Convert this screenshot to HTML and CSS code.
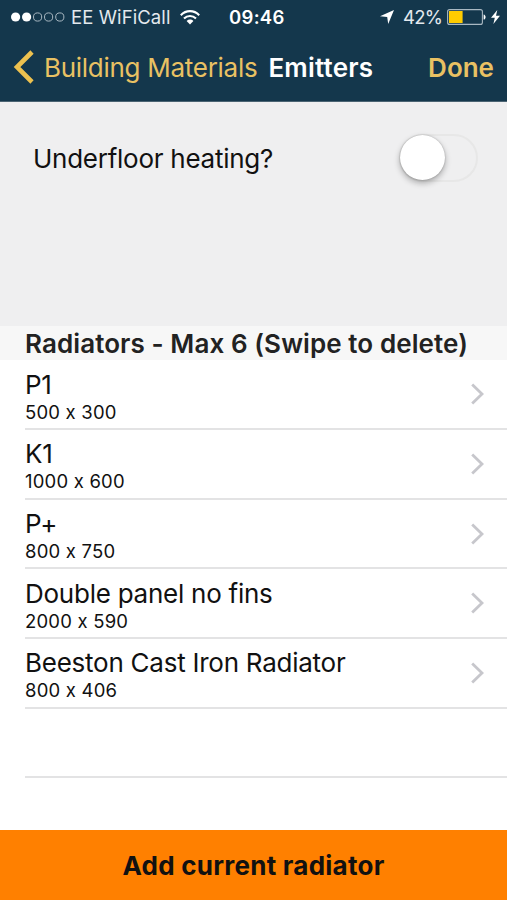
FILE: index.html
```html
<!DOCTYPE html>
<html lang="en">
<head>
    <meta charset="UTF-8">
    <meta name="viewport" content="width=device-width, initial-scale=1.0">
    <title>Emitters</title>
    <link rel="stylesheet" href="styles.css">
</head>
<body>
    <header class="top-bar">
        <div class="status-bar">
            <svg class="signal" width="54" height="12" viewBox="0 0 54 12">
                <circle cx="4.6" cy="6" r="4.6" fill="#fff"/>
                <circle cx="15.6" cy="6" r="4.6" fill="#fff"/>
                <g fill="none" stroke="#a9b8c2" stroke-width="1">
                    <circle cx="26.6" cy="6" r="4.1"/>
                    <circle cx="37.6" cy="6" r="4.1"/>
                    <circle cx="48.8" cy="6" r="4.1"/>
                </g>
            </svg>
            <span class="carrier">EE WiFiCall</span>
            <svg class="wifi" width="20" height="15" viewBox="0 0 20 15">
                <g fill="none" stroke="#fff" stroke-width="2.1">
                    <path d="M0.8 5.2C6 -0.2 14 -0.2 19.2 5.2"/>
                    <path d="M4 8.6C7.4 5.1 12.6 5.1 16 8.6"/>
                </g>
                <path d="M6.6 10.9C8.6 9 11.4 9 13.4 10.9L10 14.4Z" fill="#fff"/>
            </svg>
            <span class="time">09:46</span>
            <svg class="location" width="14" height="14" viewBox="0 0 14 14">
                <path d="M14 0L8.2 14L7.2 7L0 6.2Z" fill="#fff"/>
            </svg>
            <span class="percent">42%</span>
            <svg class="battery" width="40" height="16" viewBox="0 0 40 16">
                <rect x="0.6" y="0.6" width="34.8" height="14.8" rx="2" fill="none" stroke="#a9b8c2" stroke-width="1.1"/>
                <rect x="2" y="2" width="13.6" height="12" fill="#ffcc00"/>
                <path d="M36.6 5.4C39.2 5.8 39.2 10.2 36.6 10.6Z" fill="#fff"/>
            </svg>
            <svg class="bolt" width="9" height="14" viewBox="0 0 9 14">
                <path d="M6.3 0L0 7.8H3.8L2.4 14L9 5.8H5Z" fill="#fff"/>
            </svg>
        </div>
        <nav class="nav-bar">
            <a class="back">
                <svg width="21" height="34" viewBox="0 0 21 34">
                    <path d="M19 2L4 17L19 32" fill="none" stroke="#edc14f" stroke-width="4.6"/>
                </svg>
                <span>Building Materials</span>
            </a>
            <h1>Emitters</h1>
            <a class="done">Done</a>
        </nav>
    </header>

    <section class="settings">
        <label class="setting">
            <span class="setting-label">Underfloor heating?</span>
            <span class="switch"><span class="knob"></span></span>
        </label>
    </section>

    <h2>Radiators - Max 6 (Swipe to delete)</h2>
    <ul class="radiators">
        <li>
            <div class="info">
                <span class="name">P1</span>
                <span class="size">500 x 300</span>
            </div>
            <svg class="arrow" width="13" height="22" viewBox="0 0 13 22"><path d="M1.2 1.5L11 11L1.2 20.5"/></svg>
        </li>
        <li>
            <div class="info">
                <span class="name">K1</span>
                <span class="size">1000 x 600</span>
            </div>
            <svg class="arrow" width="13" height="22" viewBox="0 0 13 22"><path d="M1.2 1.5L11 11L1.2 20.5"/></svg>
        </li>
        <li>
            <div class="info">
                <span class="name">P+</span>
                <span class="size">800 x 750</span>
            </div>
            <svg class="arrow" width="13" height="22" viewBox="0 0 13 22"><path d="M1.2 1.5L11 11L1.2 20.5"/></svg>
        </li>
        <li>
            <div class="info">
                <span class="name">Double panel no fins</span>
                <span class="size">2000 x 590</span>
            </div>
            <svg class="arrow" width="13" height="22" viewBox="0 0 13 22"><path d="M1.2 1.5L11 11L1.2 20.5"/></svg>
        </li>
        <li>
            <div class="info">
                <span class="name">Beeston Cast Iron Radiator</span>
                <span class="size">800 x 406</span>
            </div>
            <svg class="arrow" width="13" height="22" viewBox="0 0 13 22"><path d="M1.2 1.5L11 11L1.2 20.5"/></svg>
        </li>
        <li></li>
    </ul>

    <button class="add-btn">Add current radiator</button>
</body>
</html>
```

FILE: styles.css
```css
* {
    box-sizing: border-box;
}
body {
    margin: 0;
    height: 900px;
    display: flex;
    flex-direction: column;
    background-color: #fff;
    color: #111;
    font-family: Inter, "Liberation Sans", sans-serif;
    font-size: 26px;
    font-feature-settings: "calt" 0;
    white-space: nowrap;
    overflow: hidden;
}
svg {
    display: block;
    flex: none;
}

/* Header */
.top-bar {
    height: 102px;
    flex: none;
    background-color: #14374c;
    border-bottom: 1px solid #4b6473;
    color: #fff;
}
.status-bar {
    height: 34px;
    display: flex;
    align-items: center;
    padding-left: 11px;
    font-size: 18.5px;
}
.carrier {
    width: 101px;
    margin-left: 6px;
    color: #e3e9ee;
    letter-spacing: 0.1px;
}
.wifi {
    margin-left: 8px;
}
.time {
    width: 57px;
    margin-left: 29px;
    font-weight: 600;
    letter-spacing: 0.3px;
}
.location {
    margin-left: 94px;
}
.percent {
    width: 38px;
    margin-left: 9px;
    color: #e3e9ee;
    letter-spacing: -0.8px;
}
.battery {
    margin-left: 6px;
}
.bolt {
    margin-left: 4px;
}
.nav-bar {
    height: 66px;
    display: flex;
    align-items: center;
    padding: 0 13px;
}
.back {
    display: flex;
    align-items: center;
    gap: 10px;
    color: #e9c163;
    letter-spacing: -0.28px;
}
h1 {
    margin: 0 0 0 11px;
    font-size: 26px;
    font-weight: 600;
    letter-spacing: 0.2px;
}
.done {
    margin-left: auto;
    color: #e9c163;
    font-weight: 600;
}

/* Settings */
.settings {
    height: 224px;
    flex: none;
    padding: 32px 29px 0 33px;
    background-color: #efeff0;
}
.setting {
    display: flex;
    align-items: center;
    justify-content: space-between;
}
.setting-label {
    letter-spacing: -0.26px;
}
.switch {
    width: 79px;
    height: 48px;
    border: 2px solid #e7e7e7;
    border-radius: 24px;
}
.knob {
    display: block;
    width: 45px;
    height: 45px;
    margin: -1px 0 0 -1px;
    border-radius: 50%;
    background-color: #fff;
    box-shadow: 0 3px 6px rgba(0, 0, 0, 0.3), 0 0 2px rgba(0, 0, 0, 0.25);
}

/* Radiator list */
h2 {
    height: 34px;
    flex: none;
    margin: 0;
    padding-left: 25px;
    background-color: #f7f7f7;
    color: #222;
    font-size: 26px;
    font-weight: 600;
    line-height: 36px;
    letter-spacing: 0.09px;
}
.radiators {
    flex: 1;
    margin: 0;
    padding: 0.4px 0 0 25px;
    list-style: none;
}
.radiators li {
    height: 69.67px;
    display: flex;
    align-items: center;
    justify-content: space-between;
    padding-right: 23px;
    border-bottom: 2px solid #e3e3e4;
}
.info {
    display: flex;
    flex-direction: column;
    padding-top: 4px;
}
.name {
    line-height: 32px;
    letter-spacing: -0.25px;
}
.size {
    font-size: 18.5px;
    line-height: 23px;
    letter-spacing: 0.2px;
}
.arrow path {
    fill: none;
    stroke: #c7c7cc;
    stroke-width: 2.8;
}
.add-btn {
    height: 70px;
    flex: none;
    border: none;
    background-color: #ff8000;
    color: #111;
    font-family: inherit;
    font-size: 26px;
    font-weight: 700;
    letter-spacing: 0.25px;
}
```
